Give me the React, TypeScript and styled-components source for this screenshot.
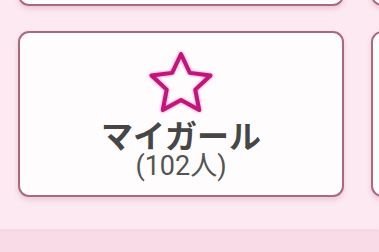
import styled, { createGlobalStyle } from "styled-components";

const GlobalStyle = createGlobalStyle`
    html, body {
        margin: 0;
        padding: 0;
        background: #fde9f2;
        font-family: Roboto, "Noto Sans CJK JP", sans-serif;
    }
`;

interface ICardItem {
    label: string;
    count?: number;
    icon?: boolean;
}

const items: ICardItem[] = [
    { label: "" },
    { label: "" },
    { label: "マイガール", count: 102, icon: true },
    { label: "" },
];

const StarIcon = () => {
    const cx = 40;
    const cy = 40;
    const outer = 31;
    const inner = 15;
    const points: string[] = [];
    for (let i = 0; i < 10; i++) {
        const r = i % 2 === 0 ? outer : inner;
        const a = (Math.PI / 5) * i - Math.PI / 2;
        points.push(`${(cx + r * Math.cos(a)).toFixed(2)},${(cy + r * Math.sin(a)).toFixed(2)}`);
    }
    return (
        <StarSvg width="80" height="80" viewBox="0 0 80 80">
            <polygon
                points={points.join(" ")}
                fill="none"
                stroke="#c0167a"
                strokeWidth="4"
                strokeLinejoin="round"
            />
        </StarSvg>
    );
};

export default function App() {
    return (
        <>
            <GlobalStyle />
            <Screen>
                <Viewport>
                    <Grid>
                        {items.map((item, i) => (
                            <Card key={i}>
                                {item.icon && <StarIcon />}
                                {item.label && <Label>{item.label}</Label>}
                                {item.count !== undefined && <Count>({item.count}人)</Count>}
                            </Card>
                        ))}
                    </Grid>
                </Viewport>
                <Footer />
            </Screen>
        </>
    );
}

const Screen = styled.div`
    width: 379px;
    height: 252px;
    display: flex;
    flex-direction: column;
    overflow: hidden;
`;

const Viewport = styled.div`
    height: 231px;
    overflow: hidden;
    flex-shrink: 0;
`;

const Grid = styled.div`
    display: grid;
    grid-template-columns: 326px 326px;
    grid-auto-rows: 166px;
    column-gap: 27px;
    row-gap: 25px;
    padding-left: 18px;
    margin-top: -160px;
`;

const Card = styled.div`
    box-sizing: border-box;
    background: #fffcfd;
    border: 2px solid #a96a81;
    border-radius: 11px;
    box-shadow: 0 3px 5px rgba(190, 120, 150, 0.28);
    display: flex;
    flex-direction: column;
    align-items: center;
    padding-top: 12px;
`;

const StarSvg = styled.svg`
    display: block;
    margin-bottom: -6px;
    filter: drop-shadow(0 0 1.5px rgba(230, 60, 160, 0.7));
`;

const Label = styled.div`
    font-family: "Noto Sans CJK JP", sans-serif;
    font-weight: 700;
    font-size: 32px;
    line-height: 31px;
    color: #464646;
`;

const Count = styled.div`
    font-family: Roboto, "Noto Sans CJK JP", sans-serif;
    font-weight: 400;
    font-size: 27px;
    line-height: 28px;
    margin-top: 2px;
    color: #545454;
`;

const Footer = styled.div`
    flex: 1;
    background: #f9dbe8;
    box-shadow: 0 -1px 2px rgba(200, 150, 170, 0.35);
`;
